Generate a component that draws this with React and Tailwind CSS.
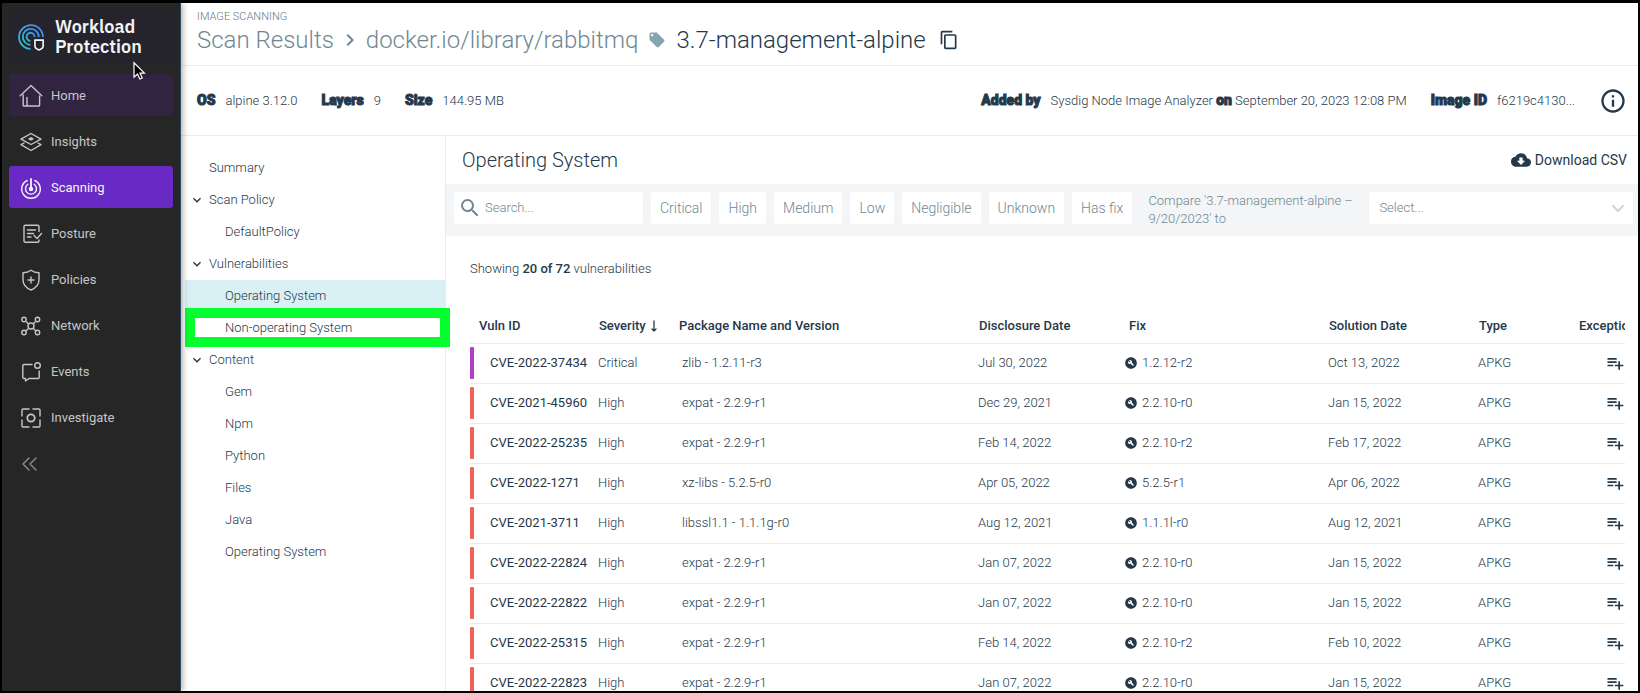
import React from "react";
import {
  MdContentCopy,
  MdLocalOffer,
  MdSearch,
  MdCloudDownload,
  MdPlaylistAdd,
  MdBuildCircle,
  MdInfoOutline,
  MdKeyboardArrowDown,
  MdChevronRight,
} from "react-icons/md";

const line = {
  viewBox: "0 0 24 24",
  fill: "none",
  stroke: "currentColor",
  strokeWidth: 1.4,
  strokeLinecap: "round",
  strokeLinejoin: "round",
  "aria-hidden": true,
};

const HomeIcon = () => (
  <svg {...line} className="size-6">
    <path d="M1.2 11.8 12 1.6l10.8 10.2M4.2 11v10.2c0 .5.3.8.8.8h14.800c.5 0 .8-.3.8-.8V12M8 13.500V22" />
  </svg>
);
const InsightsIcon = () => (
  <svg {...line} className="size-6">
    <path d="M12 3.500 22 9.200 12 14.500 2 9.200z" />
    <path d="m5 13-3 1.700 10 5.800 10-5.800-3-1.700" />
    <path d="M10 8.800 12 7.800l2 1-2 1z" fill="currentColor" />
  </svg>
);
const ScanningIcon = () => (
  <svg {...line} className="size-6">
    <path d="M12 3v10" strokeWidth="1.800" />
    <circle cx="12" cy="13" r="1.500" fill="currentColor" />
    <path d="M8.200 4.500A9.300 9.300 0 1 0 15.800 4.500" />
    <path d="M8.800 8.200A5.500 5.500 0 1 0 15.200 8.200" />
  </svg>
);
const PostureIcon = () => (
  <svg {...line} className="size-6">
    <path d="M20 9.500V4.500A1.200 1.200 0 0 0 18.800 3.300H6.200A1.200 1.200 0 0 0 5 4.500v14.500a1.200 1.200 0 0 0 1.200 1.200h12.600a1.200 1.200 0 0 0 1.200-1.200v-1" />
    <path d="M8.500 8h8M8.500 11.500h6M8.500 15H12M15 13.500l3 3 4.500-5" />
  </svg>
);
const PoliciesIcon = () => (
  <svg {...line} className="size-6">
    <path d="M12 2.300c2.300 1.700 5 2.400 8 2.500v7c0 5-3.200 8.300-8 10.200-4.800-1.900-8-5.200-8-10.200v-7c3-.1 5.700-.8 8-2.500z" />
    <path d="M12 9v6M9 12h6" />
  </svg>
);
const NetworkIcon = () => (
  <svg {...line} className="size-6">
    <circle cx="12" cy="12" r="3" />
    <circle cx="5" cy="5.500" r="2.200" />
    <circle cx="18.500" cy="5.500" r="2.200" />
    <circle cx="5" cy="18.500" r="2.200" />
    <circle cx="18.500" cy="18.500" r="2.200" />
    <path d="m7.600 7.900 1.600 1.500M16.200 7.900l-1.600 1.500M7.600 16.200l1.600-1.500M16.200 16.200l-1.600-1.500" />
  </svg>
);
const EventsIcon = () => (
  <svg {...line} className="size-6">
    <circle cx="18.500" cy="5.500" r="2.800" />
    <path d="M13 4.500H5A1.200 1.200 0 0 0 3.800 5.700v11.600A1.200 1.200 0 0 0 5 18.500h1.500V21l3.500-2.500h9a1.200 1.200 0 0 0 1.200-1.200V11" />
  </svg>
);
const InvestigateIcon = () => (
  <svg {...line} className="size-6">
    <circle cx="12" cy="12" r="3.700" strokeWidth="1.800" />
    <path d="M10 3H4.200A1.200 1.200 0 0 0 3 4.200V10M14 3h5.800A1.200 1.200 0 0 1 21 4.200V10M10 21H4.200A1.200 1.200 0 0 1 3 19.800V14M14 21h5.800a1.200 1.200 0 0 0 1.200-1.200V14" />
  </svg>
);

const Logo = () => (
  <svg viewBox="0 0 27 27" fill="none" strokeWidth="1.700" className="size-7" aria-hidden="true">
    <defs>
      <linearGradient id="brand" x1="0" y1="1" x2="1" y2="0">
        <stop offset="0" stopColor="#2fc4c9" />
        <stop offset="1" stopColor="#4a86f5" />
      </linearGradient>
    </defs>
    <g stroke="url(#brand)">
      <path d="M13 25A11.500 11.500 0 1 1 25 13.500" />
      <path d="M13 21A7.700 7.700 0 1 1 21 13.500" />
      <path d="M13 17.200A3.900 3.900 0 1 1 17 13.500" />
    </g>
    <path d="M17.300 16.500h7.900v5.700c0 1.800-1.600 3-3.950 3.800-2.350-.8-3.950-2-3.950-3.800z" fill="#25232b" stroke="#f2f4f8" strokeWidth="1.600" />
  </svg>
);

const nav = [
  ["Home", HomeIcon],
  ["Insights", InsightsIcon],
  ["Scanning", ScanningIcon],
  ["Posture", PostureIcon],
  ["Policies", PoliciesIcon],
  ["Network", NetworkIcon],
  ["Events", EventsIcon],
  ["Investigate", InvestigateIcon],
];

const navTone = {
  Home: "bg-[#302440] text-[#c6c6c6]",
  Scanning: "bg-[#6929c4] text-[#f4f4f4]",
};

function Sidebar() {
  return (
    <aside className="relative z-10 flex w-[179px] shrink-0 flex-col border-r border-[#2f4a60] bg-[#262626] px-[7px] pt-[8px] shadow-[2px_0_6px_rgba(0,0,0,0.3)]">
      <div className="flex h-[52px] items-center gap-[10px] rounded bg-[#25232b] pl-2">
        <Logo />
        <div className="font-['IBM_Plex_Sans','Noto_Sans',sans-serif] text-[18px] leading-[20px] font-semibold text-[#f2f4f8]">
          Workload
          <br />
          Protection
        </div>
      </div>
      <nav className="mt-[11px] flex flex-col gap-1">
        {nav.map(([name, Icon]) => (
          <a
            key={name}
            href="#"
            className={`flex h-[42px] items-center gap-[8px] rounded-[3px] pt-0.5 pl-[10px] text-[13px] font-normal ${navTone[name] || "text-[#c6c6c6]"}`}
          >
            <Icon />
            {name}
          </a>
        ))}
      </nav>
      <button aria-label="Collapse menu" className="mt-1 flex h-[42px] items-center pt-0.5 pl-[12px] text-[#7d8790]">
        <svg {...line} strokeWidth="1.600" viewBox="0 0 18 16" className="h-4 w-[18px]">
          <path d="M8 2 2 8l6 6M15 2 9 8l6 6" />
        </svg>
      </button>
    </aside>
  );
}

const tree = [
  { label: "Summary", level: 0 },
  { label: "Scan Policy", level: 0, open: true },
  { label: "DefaultPolicy", level: 1 },
  { label: "Vulnerabilities", level: 0, open: true },
  { label: "Operating System", level: 1, active: true },
  { label: "Non-operating System", level: 1, marked: true },
  { label: "Content", level: 0, open: true },
  { label: "Gem", level: 1 },
  { label: "Npm", level: 1 },
  { label: "Python", level: 1 },
  { label: "Files", level: 1 },
  { label: "Java", level: 1 },
  { label: "Operating System", level: 1 },
];

function Tree() {
  return (
    <nav className="w-[265px] shrink-0 border-r border-[#e7ebee] pt-4 pl-1 text-[13px]">
      {tree.map((n, i) => (
        <a
          key={i}
          href="#"
          className={`relative flex h-8 items-center ${n.level ? "pl-10" : n.open ? "pl-1" : "pl-6"} ${n.active ? "bg-[#d9f1f5]" : ""}`}
        >
          {n.open && <MdKeyboardArrowDown className="mr-1 size-4" />}
          {n.label}
          {n.marked && (
            <span className="pointer-events-none absolute -top-1 -right-[5px] -bottom-[3px] left-0 border-[10px] border-[#05ff2e]" />
          )}
        </a>
      ))}
    </nav>
  );
}

const chips = ["Critical", "High", "Medium", "Low", "Negligible", "Unknown", "Has fix"];

const rows = [
  ["CVE-2022-37434", "Critical", "zlib - 1.2.11-r3", "Jul 30, 2022", "1.2.12-r2", "Oct 13, 2022"],
  ["CVE-2021-45960", "High", "expat - 2.2.9-r1", "Dec 29, 2021", "2.2.10-r0", "Jan 15, 2022"],
  ["CVE-2022-25235", "High", "expat - 2.2.9-r1", "Feb 14, 2022", "2.2.10-r2", "Feb 17, 2022"],
  ["CVE-2022-1271", "High", "xz-libs - 5.2.5-r0", "Apr 05, 2022", "5.2.5-r1", "Apr 06, 2022"],
  ["CVE-2021-3711", "High", "libssl1.1 - 1.1.1g-r0", "Aug 12, 2021", "1.1.1l-r0", "Aug 12, 2021"],
  ["CVE-2022-22824", "High", "expat - 2.2.9-r1", "Jan 07, 2022", "2.2.10-r0", "Jan 15, 2022"],
  ["CVE-2022-22822", "High", "expat - 2.2.9-r1", "Jan 07, 2022", "2.2.10-r0", "Jan 15, 2022"],
  ["CVE-2022-25315", "High", "expat - 2.2.9-r1", "Feb 14, 2022", "2.2.10-r2", "Feb 10, 2022"],
  ["CVE-2022-22823", "High", "expat - 2.2.9-r1", "Jan 07, 2022", "2.2.10-r0", "Jan 15, 2022"],
];

function Results() {
  return (
    <div className="ml-6 mr-[13px] overflow-hidden">
      <table className="w-full min-w-[1190px] table-fixed border-collapse text-left text-[13px]">
        <colgroup>
          <col className="w-[120px]" />
          <col className="w-[80px]" />
          <col />
          <col className="w-[150px]" />
          <col className="w-[200px]" />
          <col className="w-[150px]" />
          <col className="w-[100px]" />
          <col className="w-[90px]" />
        </colgroup>
        <thead>
          <tr className="h-9 border-b border-[#e7ebee] whitespace-nowrap [&>th]:pt-0.5 [&>th]:pl-[9px] [&>th]:font-medium">
            <th>Vuln ID</th>
            <th>
              <span className="flex items-center gap-1">
                Severity
                <svg {...line} strokeWidth="1.300" viewBox="0 0 8 14" className="h-[14px] w-2">
                  <path d="M4 2v10M2 10l2 2 2-2" />
                </svg>
              </span>
            </th>
            <th>Package Name and Version</th>
            <th>Disclosure Date</th>
            <th>Fix</th>
            <th>Solution Date</th>
            <th>Type</th>
            <th>Exceptions</th>
          </tr>
        </thead>
        <tbody>
          {rows.map((r) => (
            <tr key={r[0]} className="h-10 border-b border-[#e7ebee] whitespace-nowrap">
              <td className="font-normal">
                <span className="flex items-center gap-4">
                  <span className={`h-8 w-1 rounded-[1px] ${r[1] === "Critical" ? "bg-[#ae40c6]" : "bg-[#f0625c]"}`} />
                  {r[0]}
                </span>
              </td>
              <td className="pl-2">{r[1]}</td>
              <td className="pl-3">{r[2]}</td>
              <td className="pl-2">{r[3]}</td>
              <td className="pl-1">
                <span className="flex items-center gap-1">
                  <MdBuildCircle className="size-[14px]" />
                  {r[4]}
                </span>
              </td>
              <td className="pl-2">{r[5]}</td>
              <td className="pl-2">APKG</td>
              <td>
                <button aria-label="Add exception" className="mx-auto block">
                  <MdPlaylistAdd className="size-5" />
                </button>
              </td>
            </tr>
          ))}
        </tbody>
      </table>
    </div>
  );
}

export default function App() {
  return (
    <div className="flex h-screen overflow-hidden border-2 border-t-[3px] border-black bg-white font-['Roboto',sans-serif] font-light text-[#25384a]">
      <Sidebar />
      <main className="flex min-w-0 flex-1 flex-col">
        <header className="h-[63px] shrink-0 border-b border-[#e7ebee] pt-[6px] pl-4">
          <div className="text-[11px] leading-4 text-[#5f7b8a]">IMAGE SCANNING</div>
          <h1 className="flex items-center text-[24px] leading-[30px] text-[#6f8794]">
            <a href="#">Scan Results</a>
            <MdChevronRight className="mx-1 size-6" />
            <a href="#">docker.io/library/rabbitmq</a>
            <MdLocalOffer className="mx-[10px] size-[18px] text-[#8aa3b1]" />
            <span className="text-[#25384a]">3.7-management-alpine</span>
            <button aria-label="Copy" className="ml-[13px] text-[#25384a]">
              <MdContentCopy className="size-5" />
            </button>
          </h1>
        </header>
        <section className="flex h-[70px] shrink-0 items-center border-b border-[#e7ebee] pr-[11px] pl-4 text-[13px] whitespace-nowrap [&_b]:font-['Roboto_Black','Roboto',sans-serif] [&_b]:text-[14px] [&_b]:font-black [&_b]:[-webkit-text-stroke:1px_#25384a]">
          <span><b className="mr-[10px]">OS</b>alpine 3.12.0</span>
          <span className="ml-6"><b className="mr-[10px]">Layers</b>9</span>
          <span className="ml-6"><b className="mr-[10px]">Size</b>144.95 MB</span>
          <span className="ml-auto"><b className="mr-[10px]">Added by</b>Sysdig Node Image Analyzer <b>on</b> September 20, 2023 12:08 PM</span>
          <span className="ml-6"><b className="mr-[10px]">Image ID</b>f6219c4130...</span>
          <button aria-label="Details" className="ml-6">
            <MdInfoOutline className="size-7" />
          </button>
        </section>
        <div className="flex min-h-0 flex-1">
          <Tree />
          <section className="min-w-0 flex-1">
            <div className="flex h-12 items-center justify-between pr-[11px] pl-4">
              <h2 className="text-[20px]">Operating System</h2>
              <button className="flex items-center gap-1 text-[14px] font-normal">
                <MdCloudDownload className="size-5" />
                Download CSV
              </button>
            </div>
            <div className="flex h-[52px] items-start gap-2 bg-[#f3f5f7] pt-2 pr-[5px] pl-2 text-[14px] text-[#6f8794]">
              <label className="flex h-8 w-[189px] items-center gap-[3px] rounded-[3px] bg-white pl-1">
                <MdSearch className="size-6 shrink-0" />
                <input
                  aria-label="Search"
                  placeholder="Search..."
                  className="w-full min-w-0 bg-transparent text-[13px] outline-none placeholder:text-[#6f8794]"
                />
              </label>
              {chips.map((c) => (
                <button key={c} className="h-8 shrink-0 rounded-[3px] bg-white px-[9px]">
                  {c}
                </button>
              ))}
              <label htmlFor="compare" className="ml-2 w-[213px] shrink-0 text-[13px] leading-[18px]">
                Compare '3.7-management-alpine – 9/20/2023' to
              </label>
              <div className="relative flex min-w-0 flex-1">
                <select id="compare" className="h-8 w-full appearance-none rounded-[3px] bg-white pl-[10px] text-[13px]">
                  <option>Select...</option>
                </select>
                <svg {...line} strokeWidth="2" viewBox="0 0 14 10" className="pointer-events-none absolute top-3 right-2 h-[10px] w-[14px] text-[#c9d5dc]">
                  <path d="m2 2 5 5 5-5" />
                </svg>
              </div>
            </div>
            <p className="pt-[23px] pb-7 pl-6 text-[13px] leading-5">
              Showing <b className="font-medium">20 of 72</b> vulnerabilities
            </p>
            <Results />
          </section>
        </div>
      </main>
      <svg viewBox="0 0 14 20" className="pointer-events-none absolute top-[61px] left-[132px] z-20 h-5 w-[14px]" aria-hidden="true">
        <path d="M2 1.800v14.400l3.500-3.200 2.300 5 2.400-1-2.200-4.900h4.400z" fill="#000" stroke="#fff" strokeWidth="1.200" />
      </svg>
    </div>
  );
}
